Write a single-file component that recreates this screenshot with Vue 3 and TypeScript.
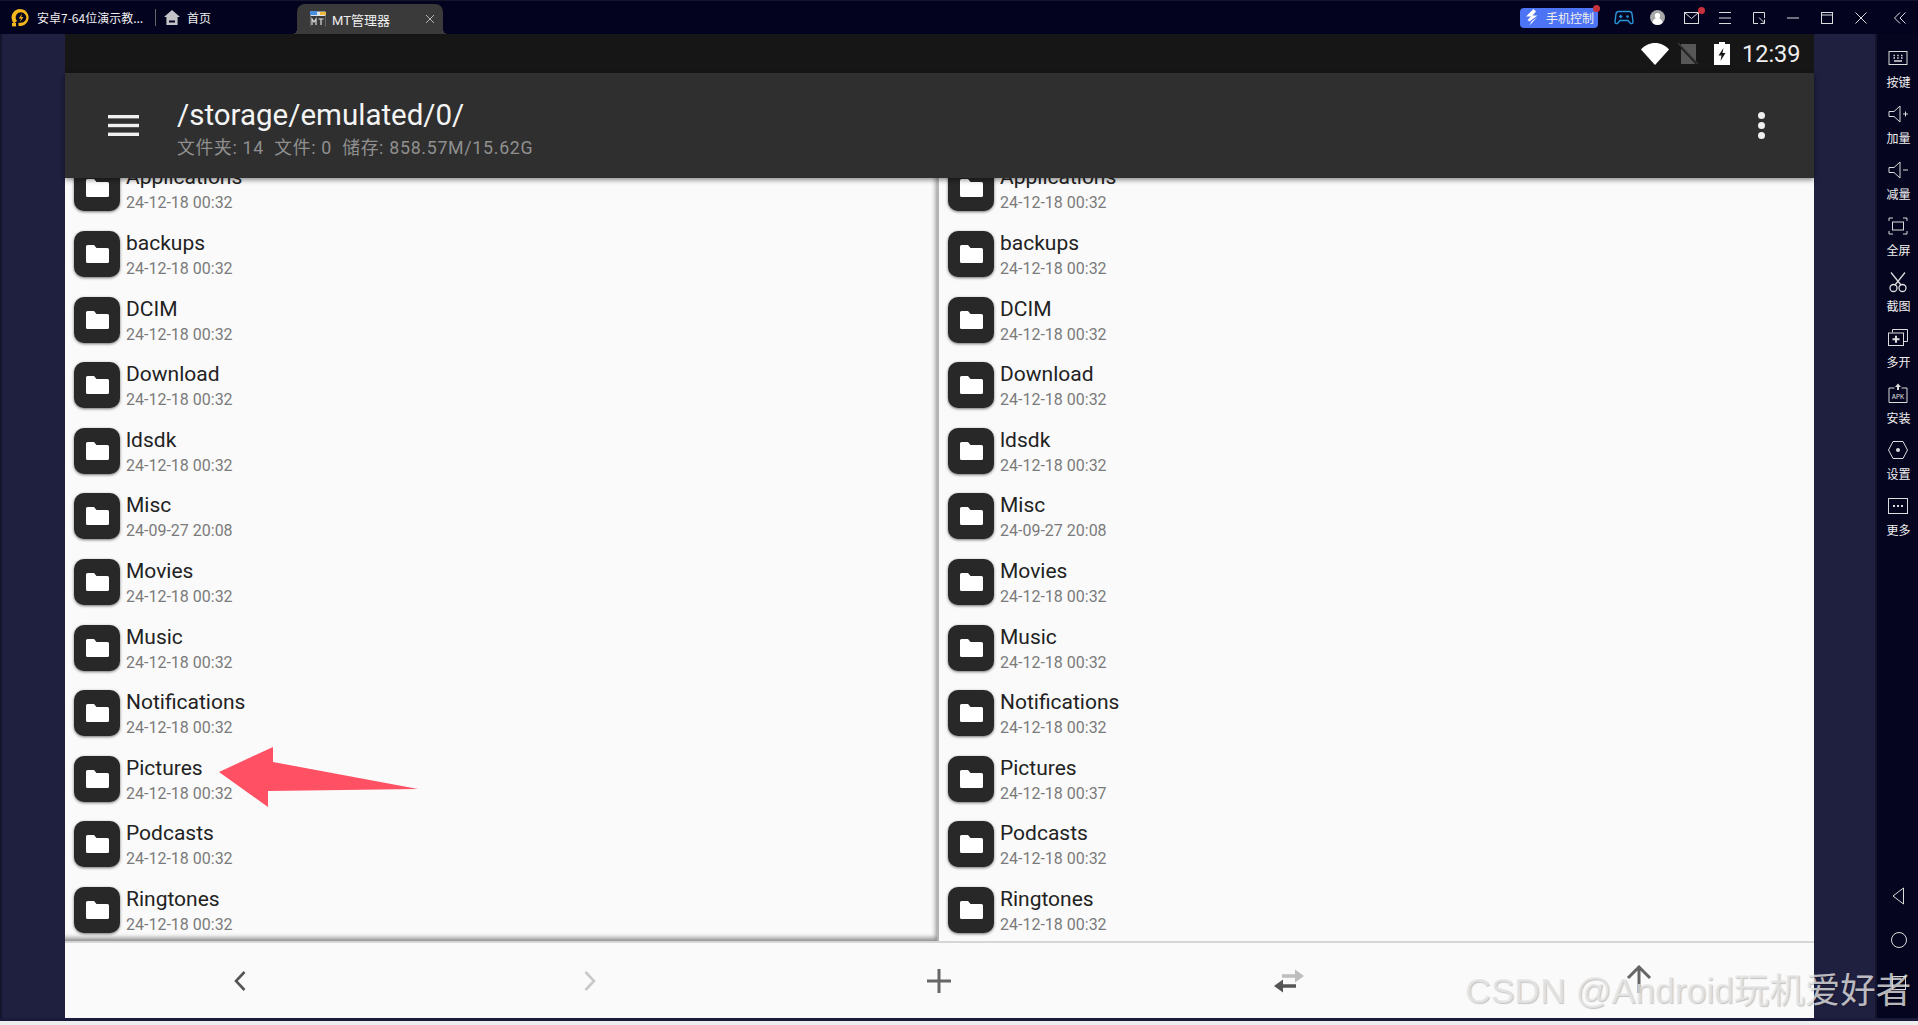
<script setup lang="ts">
type Row = { name: string; date: string };

const base: Row[] = [
  { name: "Applications", date: "24-12-18 00:32" },
  { name: "backups", date: "24-12-18 00:32" },
  { name: "DCIM", date: "24-12-18 00:32" },
  { name: "Download", date: "24-12-18 00:32" },
  { name: "ldsdk", date: "24-12-18 00:32" },
  { name: "Misc", date: "24-09-27 20:08" },
  { name: "Movies", date: "24-12-18 00:32" },
  { name: "Music", date: "24-12-18 00:32" },
  { name: "Notifications", date: "24-12-18 00:32" },
  { name: "Pictures", date: "24-12-18 00:32" },
  { name: "Podcasts", date: "24-12-18 00:32" },
  { name: "Ringtones", date: "24-12-18 00:32" },
];

const panes: { id: string; rows: Row[] }[] = [
  { id: "left", rows: base },
  {
    id: "right",
    rows: base.map((r) =>
      r.name === "Pictures" ? { ...r, date: "24-12-18 00:37" } : r
    ),
  },
];

const sideItems = ["按键", "加量", "减量", "全屏", "截图", "多开", "安装", "设置", "更多"];
</script>

<template>
  <div class="app">
    <header class="topbar">
      <div class="top-left">
        <svg class="logo" width="20" height="20" viewBox="0 0 20 20">
          <path d="M3 15.5A8.5 8.5 0 1 1 10 18H7.5v-3.2H10a5.3 5.3 0 1 0-4-1.8z" fill="#f5b71c" />
          <rect x="1" y="15" width="4" height="3.4" fill="#f5b71c" />
          <path d="M11 5.500 7.800 10.400h2.200L9 14l3.400-5h-2.200z" fill="#f5b71c" />
        </svg>
        <span class="app-name">安卓7-64位演示教...</span>
        <i class="top-sep"></i>
        <svg width="16" height="15" viewBox="0 0 16 15">
          <path d="M8 0 0 7h2.400v8h11.200V7H16z" fill="#c4c4c8" />
          <rect x="5" y="10.500" width="6" height="2" fill="#03031f" />
        </svg>
        <span class="home-text">首页</span>
      </div>
      <div class="tab">
        <svg width="16" height="16" viewBox="0 0 16 16">
          <rect x="0.500" y="0.500" width="15" height="15" fill="#dfe3ea" />
          <rect x="0" y="0" width="7" height="4" fill="#4b8fe0" />
          <rect x="10" y="1" width="6" height="3" fill="#f0b93a" />
          <rect x="0.500" y="5" width="15" height="11" fill="#3a3a3a" />
          <path d="M2 14V8l2 3 2-3v6M8.500 8h5M11 8v6" stroke="#dcdcdc" stroke-width="1.200" fill="none" />
        </svg>
        <span class="tab-title">MT管理器</span>
        <svg class="tab-close" width="10" height="10" viewBox="0 0 10 10">
          <path d="M1 1l8 8M9 1l-8 8" stroke="#b5b5b5" stroke-width="1" />
        </svg>
      </div>
      <div class="top-right">
        <div class="phone-btn">
          <svg width="14" height="17" viewBox="0 0 14 17">
            <path d="M8.500 0 1 7.500h5L2.500 11l2 1.500L12.500 6.500h-5L11 2.500zM12 8.500l-7.500 8 2-4z" fill="#fff" />
          </svg>
          <span>手机控制</span>
          <i class="red-dot phone-dot"></i>
        </div>
        <svg class="ic-game" width="20" height="16" viewBox="0 0 20 16" fill="none">
          <path d="M4.500 1.500h11c1.400 0 2.200 1 2.500 2.300l1 8c.2 1.700-1.800 2.400-2.900 1.200L14 10.500H6L3.900 13c-1.100 1.200-3.100.5-2.900-1.200l1-8C2.300 2.500 3.100 1.500 4.500 1.500z" stroke="#2796d8" stroke-width="1.400" />
          <path d="M5 6.500h3.500M6.750 4.800v3.400" stroke="#2796d8" stroke-width="1.300" />
          <circle cx="13.500" cy="6.500" r="1.300" fill="#2796d8" />
        </svg>
        <svg class="ic-user" width="15" height="15" viewBox="0 0 15 15">
          <circle cx="7.500" cy="7.500" r="7.500" fill="#a8a8a8" />
          <circle cx="7.500" cy="5.700" r="2.700" fill="#fff" />
          <path d="M2.500 13a5 5 0 0 1 10 0 7.500 7.500 0 0 1-10 0z" fill="#fff" />
        </svg>
        <div class="ic-mail">
          <svg width="15" height="12" viewBox="0 0 15 12" fill="none" stroke="#dcdcdc">
            <rect x="0.500" y="0.500" width="14" height="11" />
            <path d="M0.500 0.500 7.500 6.500 14.500 0.500" />
          </svg>
          <i class="red-dot mail-dot"></i>
        </div>
        <svg class="ic-menu" width="12" height="12" viewBox="0 0 12 12" stroke="#dcdcdc">
          <path d="M0 .5h12M0 6h12M0 11.500h12" />
        </svg>
        <svg class="ic-resize" width="12" height="12" viewBox="0 0 12 12" fill="none" stroke="#dcdcdc">
          <path d="M5 11.500H.5V.5h11V6" />
          <path d="M6 5.500l5.500 5.500M11.500 7.500v4h-4" />
        </svg>
        <svg class="ic-min" width="12" height="12" viewBox="0 0 12 12" stroke="#dcdcdc">
          <path d="M0 6h12" />
        </svg>
        <svg class="ic-max" width="12" height="12" viewBox="0 0 12 12" fill="none" stroke="#dcdcdc">
          <rect x=".5" y=".5" width="11" height="11" />
          <path d="M0 3h12" />
        </svg>
        <svg class="ic-close" width="12" height="12" viewBox="0 0 12 12" stroke="#dcdcdc">
          <path d="M.5.5l11 11M11.500.5l-11 11" />
        </svg>
        <svg class="ic-fold" width="12" height="12" viewBox="0 0 12 12" fill="none" stroke="#dcdcdc">
          <path d="M6 .5.500 6 6 11.500M11.500.5 6 6l5.500 5.500" />
        </svg>
      </div>
    </header>

    <div class="main">
      <div class="gutter-left"></div>

      <section class="device">
        <div class="statusbar">
          <svg width="28" height="22" viewBox="0 0 28 22">
            <path d="M0 6.500C3.500 2.500 8.500 0 14 0s10.500 2.500 14 6.500L14 22z" fill="#fff" />
          </svg>
          <svg class="sim" width="22" height="22" viewBox="0 0 22 22">
            <path d="M4 1h15v20H4z" fill="#575757" />
            <path d="M1 1l19 20" stroke="#161616" stroke-width="2" />
            <path d="M1 0l20 21" stroke="#3c3c3c" stroke-width="1.200" />
          </svg>
          <svg class="battery" width="16" height="23" viewBox="0 0 16 23">
            <path d="M5 0h6v2h5v21H0V2h5z" fill="#fff" />
            <path d="M9.500 6 4.500 13.500h3L6.500 19l5-8h-3z" fill="#161616" />
          </svg>
          <span class="clock">12:39</span>
        </div>

        <div class="toolbar">
          <svg class="hamburger" width="31" height="21" viewBox="0 0 31 21" fill="#f0f0f0">
            <rect width="31" height="3.400" />
            <rect y="8.800" width="31" height="3.400" />
            <rect y="17.600" width="31" height="3.400" />
          </svg>
          <div class="path-box">
            <div class="path">/storage/emulated/0/</div>
            <div class="path-info">文件夹: 14&nbsp;&nbsp;文件: 0&nbsp;&nbsp;储存: 858.57M/15.62G</div>
          </div>
          <div class="more-dots"><i></i><i></i><i></i></div>
        </div>

        <div class="panes">
          <div v-for="pane in panes" :key="pane.id" class="pane" :class="pane.id">
            <ul class="rows">
              <li v-for="row in pane.rows" :key="row.name" class="row">
                <div class="folder">
                  <svg width="23" height="18" viewBox="0 0 23 18">
                    <path d="M1.500 0h6.500l2.500 3h11A1.500 1.500 0 0 1 23 4.500v12a1.500 1.500 0 0 1-1.500 1.500h-20A1.500 1.500 0 0 1 0 16.500v-15A1.500 1.500 0 0 1 1.500 0z" fill="#fff" />
                  </svg>
                </div>
                <div class="row-text">
                  <div class="row-name">{{ row.name }}</div>
                  <div class="row-date">{{ row.date }}</div>
                </div>
              </li>
            </ul>
          </div>
        </div>

        <nav class="bottombar">
          <button class="nav-btn">
            <svg width="14" height="20" viewBox="0 0 14 20" fill="none" stroke="#555" stroke-width="2.600">
              <path d="M11.500 1 3 10l8.500 9" />
            </svg>
          </button>
          <button class="nav-btn">
            <svg width="14" height="20" viewBox="0 0 14 20" fill="none" stroke="#c9c9c9" stroke-width="2.600">
              <path d="M2.500 1 11 10l-8.500 9" />
            </svg>
          </button>
          <button class="nav-btn">
            <svg width="24" height="24" viewBox="0 0 24 24" stroke="#666" stroke-width="3">
              <path d="M0 12h24M12 0v24" />
            </svg>
          </button>
          <button class="nav-btn">
            <svg width="34" height="26" viewBox="0 0 34 26" fill="none">
              <path d="M10 8h14" stroke="#bdbdbd" stroke-width="3.500" />
              <path d="M23 1.500l9 6.500-9 6.500z" fill="#bdbdbd" />
              <path d="M24 18H10" stroke="#555" stroke-width="3.500" />
              <path d="M11 11.500 2 18l9 6.500z" fill="#555" />
            </svg>
          </button>
          <button class="nav-btn up">
            <svg width="26" height="28" viewBox="0 0 26 28" fill="none" stroke="#666" stroke-width="3">
              <path d="M13 28V2M2 13 13 2l11 11" />
            </svg>
          </button>
        </nav>
      </section>

      <div class="gutter-right"></div>

      <aside class="sidebar">
        <div v-for="(label, i) in sideItems" :key="label" class="side-item">
          <svg width="24" height="24" viewBox="0 0 24 24" fill="none" stroke="#dcdcdc">
            <template v-if="i === 0">
              <rect x="3" y="5.500" width="18" height="13" />
              <path d="M7.500 9.500h1.500M11.200 9.500h1.500M15 9.500h1.500M7.500 12h1.500M11.200 12h1.500M15 12h1.500M8 15h8" stroke-width="1.500" />
            </template>
            <template v-else-if="i === 1">
              <path d="M3 9.500h5l6-5.500v16l-6-5.500H3z" />
              <path d="M17 12h5M19.500 9.500v5" />
            </template>
            <template v-else-if="i === 2">
              <path d="M3 9.500h5l6-5.500v16l-6-5.500H3z" />
              <path d="M17 12h5" />
            </template>
            <template v-else-if="i === 3">
              <rect x="6.500" y="8" width="11" height="8" />
              <path d="M3 7V4h4M17 4h4v3M3 17v3h4M17 20h4v-3" />
            </template>
            <template v-else-if="i === 4">
              <circle cx="7.500" cy="18" r="3.500" stroke-width="1.300" />
              <circle cx="16.500" cy="18" r="3.500" stroke-width="1.300" />
              <path d="M5 2.500 15 15M19 2.500 9 15" stroke-width="1.300" />
            </template>
            <template v-else-if="i === 5">
              <path d="M6.500 6.500V3.500h15v12H18" />
              <rect x="2.500" y="7" width="15" height="12.500" />
              <path d="M6.500 13.200h7M10 9.700v7" stroke-width="2" />
            </template>
            <template v-else-if="i === 6">
              <path d="M8.500 6H3v14.500h18V6h-5.500" />
              <path d="M12 1.500 9 5h2v3h2V5h2z" fill="#dcdcdc" stroke="none" />
              <text x="12" y="17" text-anchor="middle" class="apk">APK</text>
            </template>
            <template v-else-if="i === 7">
              <path d="M7 3.500h10L21.500 12 17 20.500H7L2.500 12z" />
              <circle cx="12" cy="12" r="2" fill="#dcdcdc" stroke="none" />
            </template>
            <template v-else>
              <rect x="2.500" y="4.500" width="19" height="15" />
              <path d="M7 12h2M11 12h2M15 12h2" stroke-width="2" />
            </template>
          </svg>
          <span>{{ label }}</span>
        </div>
        <div class="side-nav">
          <svg width="16" height="18" viewBox="0 0 16 18" fill="none" stroke="#dcdcdc">
            <path d="M12.500 1v16L2 9z" />
          </svg>
          <svg width="18" height="18" viewBox="0 0 18 18" fill="none" stroke="#dcdcdc">
            <circle cx="9" cy="9" r="7.500" />
          </svg>
          <svg width="16" height="16" viewBox="0 0 16 16" fill="none" stroke="#dcdcdc">
            <rect x="1.500" y="1.500" width="13" height="13" />
          </svg>
        </div>
      </aside>
    </div>

    <div class="frame-line"></div>

    <!-- annotation drawn on top of the screenshot -->
    <svg class="arrow" width="210" height="70" viewBox="0 0 210 70">
      <polygon points="4,25 58,0 58,15 203,42 53,44 53,60" fill="#ff5064" />
    </svg>
    <div class="watermark">CSDN @Android玩机爱好者</div>
  </div>
</template>

<style>
html,
body {
  margin: 0;
  background: #eeeeee;
  overflow: hidden;
}
</style>

<style scoped>
.app {
  position: relative;
  width: 1918px;
  height: 1025px;
  display: flex;
  flex-direction: column;
  overflow: hidden;
  background: #eeeeee;
  font-family: Roboto, "Noto Sans CJK SC", sans-serif;
}

.topbar {
  height: 34px;
  flex: none;
  display: flex;
  align-items: stretch;
  background: #03031f;
  border-top: 1px solid #14142c;
  box-sizing: border-box;
  color: #eee;
  font-family: "Noto Sans CJK SC", sans-serif;
  font-size: 12px;
}
.top-left {
  width: 297px;
  flex: none;
  display: flex;
  align-items: center;
  padding-left: 11px;
  box-sizing: border-box;
}
.app-name {
  margin-left: 6px;
  width: 118px;
  white-space: nowrap;
}
.top-sep {
  width: 1px;
  height: 17px;
  background: #666;
  margin-right: 8px;
}
.home-text {
  margin-left: 7px;
}
.tab {
  position: relative;
  width: 146px;
  margin-top: 3px;
  display: flex;
  align-items: center;
  padding: 0 8px 0 13px;
  box-sizing: border-box;
  background: #3a3a3a;
  border-radius: 8px 8px 0 0;
}
.tab::before,
.tab::after {
  content: "";
  position: absolute;
  bottom: 0;
  width: 5px;
  height: 5px;
}
.tab::before {
  left: -5px;
  background: radial-gradient(circle at 0 0, transparent 5px, #3a3a3a 5px);
}
.tab::after {
  right: -5px;
  background: radial-gradient(circle at 100% 0, transparent 5px, #3a3a3a 5px);
}
.tab-title {
  margin-left: 6px;
  font-size: 13px;
  font-family: Roboto, "Noto Sans CJK SC", sans-serif;
  flex: 1;
}
.top-right {
  position: relative;
  flex: 1;
  display: flex;
  align-items: center;
  padding-left: 1077px;
}
.phone-btn {
  position: relative;
  width: 78px;
  height: 20px;
  display: flex;
  align-items: center;
  gap: 7px;
  padding-left: 5px;
  box-sizing: border-box;
  background: #4d74f5;
  border-radius: 4px;
  font-size: 12px;
}
.red-dot {
  position: absolute;
  width: 7px;
  height: 7px;
  border-radius: 50%;
  background: #c8323c;
}
.phone-dot {
  top: -3px;
  right: -2px;
}
.ic-game {
  margin-left: 16px;
}
.ic-user {
  margin-left: 16px;
}
.ic-mail {
  position: relative;
  display: flex;
  margin-left: 19px;
}
.mail-dot {
  top: -5px;
  right: -6px;
}
.ic-menu {
  margin-left: 20px;
}
.ic-resize {
  margin-left: 22px;
}
.ic-min {
  margin-left: 22px;
}
.ic-max {
  margin-left: 22px;
}
.ic-close {
  margin-left: 22px;
}
.ic-fold {
  margin-left: 27px;
}

.main {
  flex: none;
  height: 984px;
  display: flex;
}
.gutter-left {
  width: 65px;
  flex: none;
  background: #1f1f3f;
  border-left: 2px solid #14142c;
  box-sizing: border-box;
}
.gutter-right {
  width: 61px;
  flex: none;
  background: #1f1f3f;
}
.device {
  width: 1749px;
  flex: none;
  display: flex;
  flex-direction: column;
  background: #fafafa;
}
.statusbar {
  height: 39px;
  flex: none;
  display: flex;
  align-items: center;
  justify-content: flex-end;
  padding-right: 14px;
  background: #161616;
}
.sim {
  margin-left: 8px;
}
.battery {
  margin-left: 15px;
}
.clock {
  width: 58px;
  margin-left: 12px;
  color: #eeeeee;
  font-size: 23.5px;
  white-space: nowrap;
}

.toolbar {
  position: relative;
  z-index: 2;
  height: 105px;
  flex: none;
  display: flex;
  align-items: center;
  background: #2f2f2f;
  box-shadow: 0 2px 5px rgba(0, 0, 0, 0.45);
}
.hamburger {
  margin-left: 43px;
  flex: none;
}
.path-box {
  margin-left: 38px;
  flex: 1;
  padding-top: 6px;
}
.path {
  color: #f4f4f4;
  font-size: 29.5px;
  line-height: 34px;
}
.path-info {
  color: #8f8f8f;
  font-size: 17.8px;
  line-height: 25px;
  letter-spacing: 0.7px;
  margin-top: 3px;
}
.more-dots {
  margin-right: 49px;
  display: flex;
  flex-direction: column;
  gap: 3px;
}
.more-dots i {
  width: 7px;
  height: 7px;
  border-radius: 50%;
  background: #f0f0f0;
}

.panes {
  flex: 1;
  min-height: 0;
  display: flex;
}
.pane {
  position: relative;
  overflow: hidden;
  background: #fafafa;
}
.pane.left {
  width: 874px;
  flex: none;
  border-right: 2px solid #b4b4b4;
  box-sizing: border-box;
}
/* the shadow the left panel drops on its right and bottom edges, over the rows */
.pane.left::after {
  content: "";
  position: absolute;
  inset: 0;
  box-shadow: inset -3px -5px 5px -2px rgba(0, 0, 0, 0.45);
  pointer-events: none;
}
.pane.right {
  flex: 1;
}
.rows {
  list-style: none;
  margin: -22.4px 0 0;
  padding: 0;
}
.pane.left .rows {
  padding-left: 9px;
}
.pane.right .rows {
  padding-left: 9px;
}
.row {
  height: 65.6px;
  display: flex;
  align-items: center;
  gap: 6px;
}
.folder {
  width: 46px;
  height: 46px;
  flex: none;
  display: flex;
  align-items: center;
  justify-content: center;
  background: #282828;
  border-radius: 10px;
  box-shadow: 0 1px 3px rgba(0, 0, 0, 0.55);
}
.row-text {
  padding-top: 1px;
}
.row-name {
  color: #222222;
  font-size: 21px;
  line-height: 26px;
}
.row-date {
  color: #7a7a7a;
  font-size: 16px;
  line-height: 20px;
  margin-top: 3px;
}

.bottombar {
  position: relative;
  z-index: 1;
  height: 77px;
  flex: none;
  display: grid;
  grid-template-columns: repeat(5, 1fr);
  background: #fafafa;
  border-top: 2px solid #d6d6d6;
  box-sizing: border-box;
}
.nav-btn {
  display: flex;
  align-items: center;
  justify-content: center;
  padding: 0;
  background: none;
  border: none;
}
.nav-btn.up svg {
  margin-bottom: 4px;
}

.sidebar {
  flex: 1;
  display: flex;
  flex-direction: column;
  align-items: center;
  padding-top: 12px;
  padding-left: 2px;
  background: #05051f;
  border-left: 2px solid #14142c;
  box-sizing: border-box;
  color: #f0f0f0;
  font-family: "Noto Sans CJK SC", sans-serif;
  font-size: 12px;
}
.side-item {
  height: 56px;
  flex: none;
  display: flex;
  flex-direction: column;
  align-items: center;
  gap: 3px;
  line-height: 17px;
}
.apk {
  font-family: "Liberation Mono", monospace;
  font-size: 7px;
  fill: #dcdcdc;
  stroke: none;
}
.side-nav {
  margin-top: auto;
  margin-bottom: 27px;
  display: flex;
  flex-direction: column;
  align-items: center;
  gap: 26px;
}

.frame-line {
  height: 3px;
  flex: none;
  background: #1a1a3a;
}

.arrow {
  position: absolute;
  z-index: 5;
  left: 215px;
  top: 747px;
}
.watermark {
  position: absolute;
  z-index: 5;
  left: 1465px;
  top: 970px;
  color: rgba(232, 232, 232, 0.8);
  font-family: "Liberation Sans", "Noto Sans CJK SC", sans-serif;
  font-size: 35.5px;
  line-height: 42px;
  white-space: nowrap;
  text-shadow: 1px 1px 1px rgba(0, 0, 0, 0.22);
}
</style>
